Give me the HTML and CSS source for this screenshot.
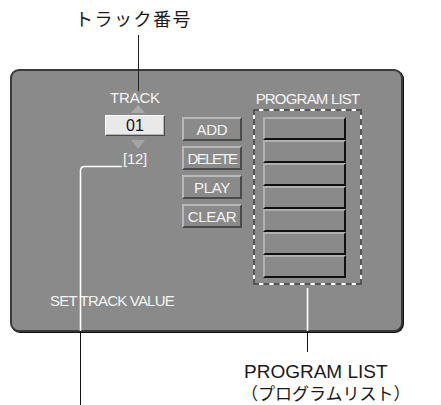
FILE: index.html
```html
<!DOCTYPE html>
<html lang="ja">
  <head>
    <meta charset="UTF-8" />
    <title>PROGRAM LIST</title>
    <link rel="stylesheet" href="styles.css">
  </head>
  <body>
    <div class="page">
      <p class="caption top">トラック番号</p>
      <div class="panel">
        <div class="controls">
          <div class="track">
            <span class="label">TRACK</span>
            <span class="arrow up"></span>
            <span class="value">01</span>
            <span class="arrow down"></span>
            <span class="count">[12]</span>
          </div>
          <div class="actions">
            <button class="btn">ADD</button>
            <button class="btn narrow">DELETE</button>
            <button class="btn">PLAY</button>
            <button class="btn">CLEAR</button>
          </div>
          <div class="program">
            <span class="label">PROGRAM LIST</span>
            <ol class="slots">
              <li></li>
              <li></li>
              <li></li>
              <li></li>
              <li></li>
              <li></li>
              <li></li>
            </ol>
          </div>
        </div>
        <p class="hint">SET TRACK VALUE</p>
      </div>
      <p class="caption bottom">PROGRAM LIST<br><span class="jp">（プログラムリスト）</span></p>

      <!-- 引き出し線 -->
      <svg class="leaders" width="441" height="405" viewBox="0 0 441 405">
        <path d="M138.5 35 V91" stroke="#222" fill="none" />
        <path d="M122 166.5 H85 Q80.5 166.5 80.5 171 V405" stroke="#111" fill="none" />
        <path d="M122 166.5 H85 Q80.5 166.5 80.5 171 V331" stroke="#fff" stroke-width="1.6" fill="none" />
        <path d="M307.5 288 V352" stroke="#111" fill="none" />
        <path d="M307.5 288 V331" stroke="#fff" stroke-width="1.6" fill="none" />
      </svg>
    </div>
  </body>
</html>
```

FILE: styles.css
```css
html,
body {
  margin: 0;
  background: #fff;
}
.page {
  position: relative;
  width: 441px;
  height: 405px;
  overflow: hidden;
  font-family: "Liberation Sans", Arial, sans-serif;
}
.caption {
  margin: 0;
  color: #1a1a1a;
}
.caption.top {
  padding: 7px 0 0 75px;
  font-family: "Noto Sans CJK JP", sans-serif;
  font-size: 18px;
  line-height: 23px;
  letter-spacing: 1.5px;
}
.caption.bottom {
  margin-top: 29px;
  padding-left: 244px;
  font-size: 19px;
  line-height: 22px;
}
.caption .jp {
  display: inline-block;
  margin: 1px 0 0 -3px;
  font-family: "Noto Sans CJK JP", sans-serif;
  font-size: 17px;
  line-height: 18px;
}

.panel {
  box-sizing: border-box;
  width: 393px;
  height: 263px;
  margin: 39px 0 0 10px;
  padding: 20px 0 0 0;
  background: #8a8a8a;
  border: 2px solid #3a3a3a;
  border-radius: 9px;
  box-shadow: 1px 1px 0 #111;
  color: #f4f4f4;
}
.controls {
  display: flex;
  align-items: flex-start;
  padding-left: 93px;
}
.label {
  display: block;
  font-size: 15px;
  line-height: 15px;
  letter-spacing: -0.8px;
  text-align: center;
}

/* トラック番号 */
.track {
  display: flex;
  flex-direction: column;
  align-items: center;
  width: 60px;
}
.track .label {
  font-size: 15px;
  line-height: 14px;
  letter-spacing: -0.2px;
}
.arrow {
  width: 0;
  height: 0;
  margin-left: 6px;
  border-left: 7px solid transparent;
  border-right: 7px solid transparent;
}
.arrow.up {
  border-bottom: 8px solid #a9a9a9;
}
.arrow.down {
  margin-top: 4px;
  border-top: 9px solid #a4a4a4;
}
.value {
  box-sizing: border-box;
  width: 60px;
  height: 21px;
  margin-top: 2px;
  background: #e9e9e9;
  border: 1px solid;
  border-color: #fff #4a4a4a #4a4a4a #fff;
  box-shadow: inset -1px -1px 0 #b5b5b5;
  color: #111;
  font-size: 16px;
  line-height: 19px;
  text-align: center;
}
.count {
  margin-top: 2px;
  font-size: 15px;
  line-height: 15px;
  letter-spacing: -0.3px;
}

/* ボタン */
.actions {
  display: flex;
  flex-direction: column;
  gap: 5px;
  margin: 26px 0 0 17px;
}
.btn {
  box-sizing: border-box;
  width: 60px;
  height: 24px;
  padding: 0;
  background: #8a8a8a;
  border: 2px solid;
  border-color: #b8b8b8 #4a4a4a #4a4a4a #b8b8b8;
  color: #f4f4f4;
  font-family: "Liberation Sans", Arial, sans-serif;
  font-size: 15px;
  letter-spacing: -0.3px;
}
.btn.narrow {
  letter-spacing: -1.6px;
}

/* プログラムリスト */
.program {
  margin-left: 11px;
}
.program .label {
  width: 109px;
}
.slots {
  position: relative;
  box-sizing: border-box;
  width: 109px;
  height: 176px;
  margin: 3px 0 0 0;
  padding: 6px 0 0 8px;
  list-style: none;
  border: 2px solid #fff;
}
.slots::after {
  content: "";
  position: absolute;
  inset: -2px;
  border: 2px dashed #555;
}
.slots li {
  box-sizing: border-box;
  width: 83px;
  height: 23px;
  border: 2px solid;
  border-color: #b0b0b0 #111 #111 #b0b0b0;
}

.hint {
  margin: 8px 0 0 38px;
  font-size: 15px;
  line-height: 15px;
  letter-spacing: -0.8px;
}

.leaders {
  position: absolute;
  top: 0;
  left: 0;
  pointer-events: none;
}
```
